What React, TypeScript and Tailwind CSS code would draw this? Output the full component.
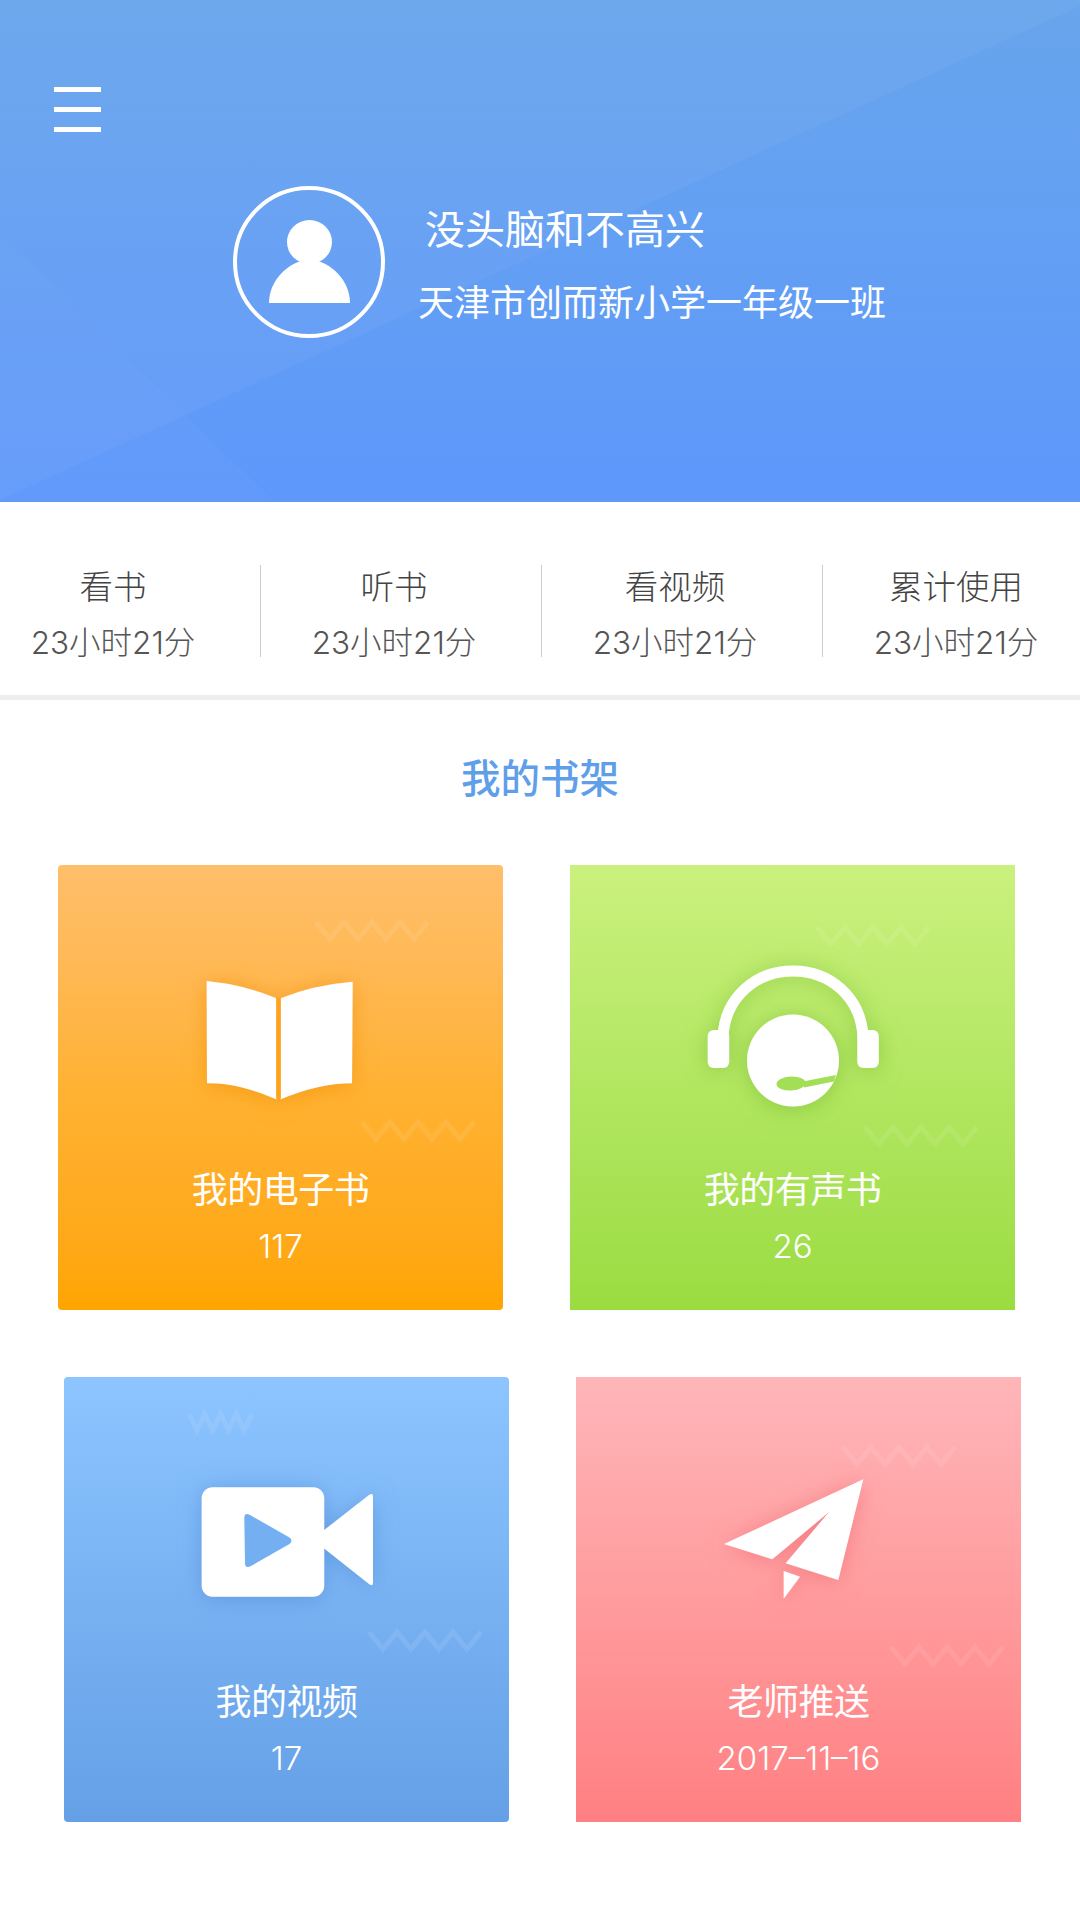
import React from "react";

const font = "font-['Inter','Noto_Sans_CJK_SC',sans-serif]";

const stats = [
  { label: "看书", value: "23小时21分" },
  { label: "听书", value: "23小时21分" },
  { label: "看视频", value: "23小时21分" },
  { label: "累计使用", value: "23小时21分" },
];

const Wave = ({ x, y, w = 112, h = 17 }: { x: number; y: number; w?: number; h?: number }) => {
  const step = w / 8;
  const pts = [0, 1, 2, 3, 4, 5, 6, 7, 8]
    .map((i) => `${x + i * step},${i % 2 === 0 ? y : y + h}`)
    .join(" ");
  return <polyline points={pts} fill="none" stroke="#fff" strokeOpacity="0.09" strokeWidth="5" />;
};

const Shadow = ({ id, color }: { id: string; color: string }) => (
  <filter id={id} x="-40%" y="-40%" width="180%" height="180%">
    <feDropShadow dx="0" dy="2" stdDeviation="11" floodColor={color} floodOpacity="0.6" />
  </filter>
);

const BookArt = () => (
  <svg viewBox="0 0 445 290" className="w-[445px] h-[290px] block">
    <defs>
      <Shadow id="s1" color="#f08c00" />
    </defs>
    <Wave x={258} y={57} />
    <Wave x={304} y={257} />
    <g fill="#fff" filter="url(#s1)">
      <path d="M148.7 116 Q188 120 218.3 133.3 V234.3 Q178 217 149 218.3 Z" />
      <path d="M294.7 116.7 Q255 120 222.7 133.3 V234.3 Q262 218 294 218.3 Z" />
    </g>
    <rect x="218.3" y="133" width="4.4" height="100" fill="#ffa31f" />
  </svg>
);

const HeadsetArt = () => (
  <svg viewBox="0 0 445 290" className="w-[445px] h-[290px] block">
    <defs>
      <Shadow id="s2" color="#72b82a" />
    </defs>
    <Wave x={247} y={62} />
    <Wave x={295} y={262} />
    <g filter="url(#s2)">
      <path d="M153 172 C155 132 186 106 223 106 C260 106 291 132 293 172" fill="none" stroke="#fff" strokeWidth="11" />
      <rect x="137.7" y="165" width="21.5" height="38" rx="6" fill="#fff" />
      <rect x="287.3" y="165" width="21.5" height="38" rx="6" fill="#fff" />
      <circle cx="223" cy="195.5" r="46" fill="#fff" />
    </g>
    <ellipse cx="221" cy="218.5" rx="14.5" ry="7" fill="#a2df57" transform="rotate(-3 221 218.5)" />
    <polygon points="233,216.5 266,210 264,216.5 234,222.5" fill="#a2df57" />
  </svg>
);

const VideoArt = () => (
  <svg viewBox="0 0 445 290" className="w-[445px] h-[290px] block">
    <defs>
      <Shadow id="s3" color="#4f8bd6" />
    </defs>
    <Wave x={125} y={37} w={63} h={16} />
    <Wave x={305} y={255} />
    <g fill="#fff" filter="url(#s3)">
      <rect x="137.7" y="110.3" width="122.5" height="109.4" rx="11" />
      <path d="M258 154.7 L305 118 Q309 115 309 120 V205 Q309 210 305 207 L258 169.7 Z" />
    </g>
    <path
      d="M180.3 141 Q180.3 135 186 138 L225.5 160.5 Q229.5 163.7 225.5 167 L187 189 Q181 192 181 186 Z"
      fill="#74aff2"
    />
  </svg>
);

const PlaneArt = () => (
  <svg viewBox="0 0 445 290" className="w-[445px] h-[290px] block">
    <defs>
      <Shadow id="s4" color="#f0686e" />
    </defs>
    <Wave x={267} y={70} />
    <Wave x={315} y={270} />
    <g fill="#fff" filter="url(#s4)">
      <polygon points="287.3,102.3 148,167 196.3,182.3 253.3,134.7 209.7,186.3 262.3,203" />
      <polygon points="207.7,194 224,199.7 207.7,221.7" />
    </g>
  </svg>
);

const Card = ({
  title,
  sub,
  art,
  className,
}: {
  title: string;
  sub: string;
  art: React.ReactNode;
  className: string;
}) => (
  <div className={`w-[445px] h-[445px] flex flex-col items-center text-white ${className}`}>
    {art}
    <div className="text-[36px] leading-[70px] tracking-[-0.5px] font-normal">{title}</div>
    <div className="text-[33px] leading-[43px] font-light">{sub}</div>
  </div>
);

export default function App() {
  return (
    <div className={`w-[1080px] h-[1921px] overflow-hidden bg-white ${font}`}>
      {/* header */}
      <header className="relative h-[502px] bg-gradient-to-b from-[#68a5ec] to-[#5e98fb] overflow-hidden">
        <svg viewBox="0 0 1080 502" className="absolute inset-0 w-full h-full">
          <polygon points="0,0 1080,0 1080,6 0,500" fill="#fff" fillOpacity="0.04" />
          <polygon points="0,233 275,502 0,502" fill="#fff" fillOpacity="0.02" />
        </svg>
        <div className="relative pt-[87px] pl-[54px]">
          <div className="w-[47px] flex flex-col gap-[15px]">
            <span className="h-[5px] bg-white" />
            <span className="h-[5px] bg-white" />
            <span className="h-[5px] bg-white" />
          </div>
        </div>
        <div className="relative mt-[54px] ml-[233px] flex text-white">
          <div className="relative w-[152px] h-[152px] rounded-full border-[4px] border-white shrink-0">
            <svg viewBox="0 0 152 152" className="absolute -inset-[4px] w-[152px] h-[152px]">
              <ellipse cx="76.5" cy="56" rx="22.5" ry="22" fill="#fff" />
              <path d="M36 117 C36 95 54 76 76.5 73 C99 76 117 95 117 117 Z" fill="#fff" />
            </svg>
          </div>
          <div className="ml-[33px] font-normal">
            <div className="pl-[7px] pt-[16px] text-[40px] leading-[56px]">没头脑和不高兴</div>
            <div className="mt-[20px] text-[36px] leading-[50px]">天津市创而新小学一年级一班</div>
          </div>
        </div>
      </header>

      {/* stats */}
      <div className="flex pt-[63px] h-[193px] text-[#555] font-light">
        {stats.map((s, i) => (
          <div key={s.label} className="flex shrink-0 w-[281px]">
            <div className="w-[226px] shrink-0 flex flex-col items-center -mt-[1px]">
              <div className="text-[33.5px] leading-[46px] font-light text-[#444]">{s.label}</div>
              <div className="mt-[10px] text-[31.5px] leading-[46px] whitespace-nowrap">{s.value}</div>
            </div>
            {i < 3 && <div className="ml-[34px] w-px h-[92px] bg-[#ccc]" />}
          </div>
        ))}
      </div>
      <div className="h-[5px] bg-[#eeeeee]" />

      {/* shelf */}
      <h2 className="mt-[54px] text-center text-[39.5px] leading-[50px] font-medium text-[#5f9fea]">我的书架</h2>

      <div className="mt-[61px] pl-[58px] flex gap-[67px]">
        <Card
          title="我的电子书"
          sub="117"
          art={<BookArt />}
          className="rounded-[4px] bg-gradient-to-b from-[#ffbe6a] via-[#ffb232] to-[#ffa500]"
        />
        <Card
          title="我的有声书"
          sub="26"
          art={<HeadsetArt />}
          className="bg-gradient-to-b from-[#caf17d] to-[#9adc40]"
        />
      </div>
      <div className="mt-[67px] pl-[64px] flex gap-[67px]">
        <Card
          title="我的视频"
          sub="17"
          art={<VideoArt />}
          className="rounded-[4px] bg-gradient-to-b from-[#8cc5ff] to-[#659fe6]"
        />
        <Card
          title="老师推送"
          sub="2017–11–16"
          art={<PlaneArt />}
          className="bg-gradient-to-b from-[#ffb6b9] to-[#ff7f82]"
        />
      </div>
    </div>
  );
}
